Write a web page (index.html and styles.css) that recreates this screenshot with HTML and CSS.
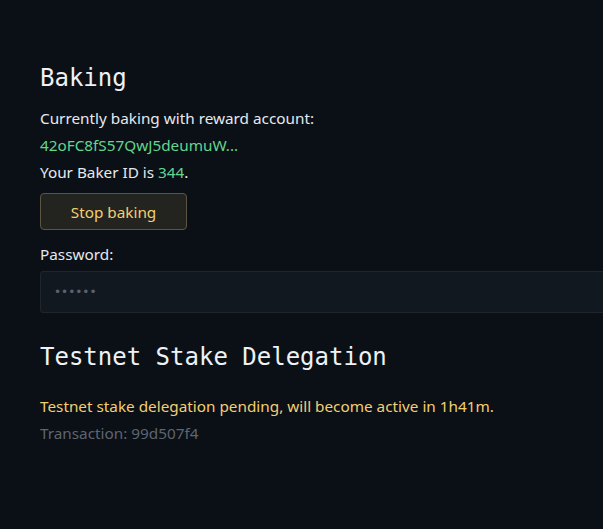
FILE: index.html
```html
<!DOCTYPE html>
<html lang="en">
<head>
<meta charset="utf-8">
<title>Baking</title>
<link rel="stylesheet" href="styles.css">
</head>
<body>
<main class="page">
  <section class="section baking">
    <h2 class="heading">Baking</h2>
    <p class="line">Currently baking with reward account:</p>
    <p class="line green">42oFC8fS57QwJ5deumuW...</p>
    <p class="line">Your Baker ID is <span class="green">344</span>.</p>
    <button class="btn" type="button">Stop baking</button>
    <label class="label" for="pw">Password:</label>
    <input class="input" id="pw" type="password" placeholder="••••••">
  </section>
  <section class="section delegation">
    <h2 class="heading">Testnet Stake Delegation</h2>
    <p class="line yellow">Testnet stake delegation pending, will become active in 1h41m.</p>
    <p class="line muted">Transaction: 99d507f4</p>
  </section>
</main>
</body>
</html>
```
FILE: styles.css
```css
html, body {
  margin: 0;
  padding: 0;
  background: #0b1016;
  overflow: hidden;
  height: 100%;
}
body {
  font-family: "Noto Sans", "Open Sans", sans-serif;
  font-size: 15.3px;
  color: #e6e9ee;
}
.page {
  padding: 62px 0 0 40px;
}
.section {
  display: flex;
  flex-direction: column;
  align-items: flex-start;
}
.heading {
  font-family: "DejaVu Sans Mono", "Liberation Mono", monospace;
  font-weight: 400;
  font-size: 24px;
  line-height: 32px;
  margin: 0 0 11px;
  color: #eef1f5;
}
.line {
  margin: 0;
  line-height: 27px;
}
.green { color: #62d68f; }
.yellow { color: #f2cf72; }
.muted { color: #5d6570; }
.btn {
  margin-top: 7px;
  width: 147px;
  height: 37px;
  background: #23231f;
  border: 1px solid #5b5541;
  border-radius: 4px;
  color: #f2cf72;
  font-family: inherit;
  font-size: 15.3px;
  padding: 0;
}
.label {
  margin-top: 11px;
  line-height: 26px;
}
.input {
  margin-top: 4px;
  width: 640px;
  height: 42px;
  box-sizing: border-box;
  background: #121820;
  border: 1px solid #1f262e;
  border-radius: 3px;
  padding: 0 13px;
  color: #5a626d;
  font-family: "DejaVu Sans", sans-serif;
  font-size: 12px;
}
.input::placeholder {
  color: #5a626d;
  letter-spacing: 0;
}
.delegation {
  margin-top: 28px;
}
.delegation .heading {
  margin-bottom: 20px;
}
```
